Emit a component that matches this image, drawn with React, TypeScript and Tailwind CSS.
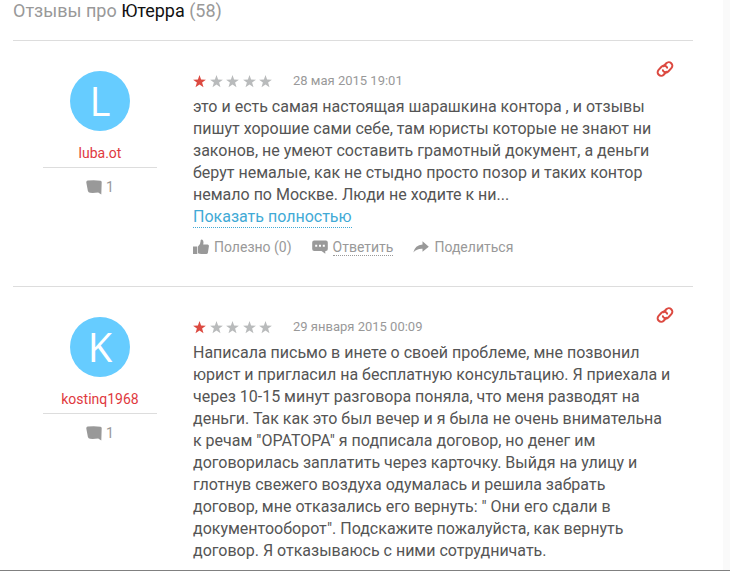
interface Review {
  id: number;
  author: string;
  letter: string;
  reviewCount: number;
  rating: number;
  date: string;
  text: string;
  truncated: boolean;
}

const reviews: Review[] = [
  {
    id: 1,
    author: "luba.ot",
    letter: "L",
    reviewCount: 1,
    rating: 1,
    date: "28 мая 2015 19:01",
    text: "это и есть самая настоящая шарашкина контора , и отзывы пишут хорошие сами себе, там юристы которые не знают ни законов, не умеют составить грамотный документ, а деньги берут немалые, как не стыдно просто позор и таких контор немало по Москве. Люди не ходите к ни...",
    truncated: true,
  },
  {
    id: 2,
    author: "kostinq1968",
    letter: "K",
    reviewCount: 1,
    rating: 1,
    date: "29 января 2015 00:09",
    text: 'Написала письмо в инете о своей проблеме, мне позвонил юрист и пригласил на бесплатную консультацию. Я приехала и через 10-15 минут разговора поняла, что меня разводят на деньги. Так как это был вечер и я была не очень внимательна к речам "ОРАТОРА" я подписала договор, но денег им договорилась заплатить через карточку. Выйдя на улицу и глотнув свежего воздуха одумалась и решила забрать договор, мне отказались его вернуть: " Они его сдали в документооборот". Подскажите пожалуйста, как вернуть договор. Я отказываюсь с ними сотрудничать.',
    truncated: false,
  },
];

const Star = ({ active }: { active: boolean }) => (
  <svg
    viewBox="0 0 14 14"
    className={active ? "size-[13px] fill-[#dc4a41]" : "size-[13px] fill-[#b9bbbc]"}
  >
    <path d="M7 0l1.700 4.900 5.200.1-4.100 3.200 1.500 5L7 10.300 2.700 13.200l1.500-5L.1 5l5.200-.1z" />
  </svg>
);

const BubbleIcon = () => (
  <svg viewBox="0 0 16 15" className="h-[15px] w-4 fill-[#999]">
    <path d="M1.700.6Q8-.1 14.500.7q1.200.2 1.200 1.300L15.300 14.600 12.200 12.600Q7 13.200 4 12.800 2.400 12.600 1.900 11L.3 2.500Q.2.800 1.700.6z" />
  </svg>
);

const ThumbIcon = () => (
  <svg viewBox="0 0 16 16" className="size-4 fill-[#999]">
    <path d="M0 7.500h4.300v7.500H0zM5 7.400Q7.900 5 7.600 1.200 8.300.2 9.400.8 11 1.800 10.200 5.500h4.400q1.500.2 1.300 1.700l-1 6.500q-.3 1.300-1.600 1.300H8.500Q6.200 15 5 14.200z" />
  </svg>
);

const AnswerIcon = () => (
  <svg viewBox="0 0 16 14" className="h-3.5 w-4 fill-[#999]">
    <path
      fillRule="evenodd"
      d="M2.200.5h11.600q2 0 2 2v6.500q0 2-2 2h-.5v2.700L9.500 11H2.200Q.2 11 .2 9V2.500q0-2 2-2zM3.200 4.800v2h2v-2zM7 4.800v2h2v-2zM10.800 4.800v2h2v-2z"
    />
  </svg>
);

const ShareIcon = () => (
  <svg viewBox="0 0 16 12" className="h-3 w-4 fill-[#999]">
    <path d="M9.500.3L15.800 5.700 9.500 10.800V7.800Q4 7.400.3 11.500 2 4.200 9.500 3.500z" />
  </svg>
);

const ChainIcon = () => (
  <svg
    viewBox="0 0 18 18"
    className="size-[18px] fill-none stroke-[#dc4a41]"
    strokeWidth="2"
    strokeLinecap="round"
  >
    <path d="M7.600 6.200l2.700-2.900a3.500 3.500 0 0 1 5.100 4.800l-2.900 3.100a3.500 3.500 0 0 1-4.800.3 3.400 3.400 0 0 1-.8-1.200" />
    <path d="M10.400 11.800l-2.700 2.900a3.500 3.500 0 0 1-5.100-4.800l2.900-3.100a3.500 3.500 0 0 1 4.800-.3 3.400 3.400 0 0 1 .8 1.200" />
  </svg>
);

function ReviewItem({ review }: { review: Review }) {
  return (
    <article className="flex border-t border-[#ddd] pt-[30px] pb-[29px] last:pb-2">
      {/* Author */}
      <div className="ml-[30px] w-[114px] shrink-0 text-center">
        <div className="mx-auto flex size-15 items-center justify-center rounded-full bg-[#66ccff] font-['Open_Sans',sans-serif] text-[40px] leading-none text-white">
          {review.letter}
        </div>
        <a
          href="#author"
          className="mt-3 block border-b border-[#ddd] pb-1 text-sm leading-5 text-[#e0393e]"
        >
          {review.author}
        </a>
        <div className="mt-2 flex items-center justify-center gap-1 text-sm leading-[22px] text-[#999]">
          <BubbleIcon />
          <span>{review.reviewCount}</span>
        </div>
      </div>

      {/* Content */}
      <div className="ml-9 min-w-0 flex-1">
        <div className="mb-[5px] flex h-5 items-center">
          <div
            className="flex w-[79px] justify-between"
            role="img"
            aria-label={`Оценка ${review.rating} из 5`}
          >
            {[1, 2, 3, 4, 5].map((n) => (
              <Star key={n} active={n <= review.rating} />
            ))}
          </div>
          <time className="ml-[21px] text-[13px] text-[#999]">{review.date}</time>
          <a href="#review" aria-label="Ссылка на отзыв" className="mr-[19px] mb-6 ml-auto">
            <ChainIcon />
          </a>
        </div>
        <p className="max-w-[479px] text-base leading-[22px] text-[#555]">
          {review.text}
        </p>
        {review.truncated && (
          <>
            <button className="mt-px block border-b border-dotted border-[#42aad6] text-base leading-5 text-[#42aad6]">
              Показать полностью
            </button>
            <div className="mt-[9px] flex items-center text-sm text-[#999]">
              <button className="flex items-center gap-[5px]">
                <ThumbIcon />
                Полезно (0)
              </button>
              <button className="ml-5 flex items-center gap-[5px]">
                <AnswerIcon />
                <span className="border-b border-dotted border-[#999] leading-4">
                  Ответить
                </span>
              </button>
              <button className="ml-5 flex items-center gap-[5px]">
                <ShareIcon />
                Поделиться
              </button>
            </div>
          </>
        )}
      </div>
    </article>
  );
}

export default function App() {
  return (
    <div className="flex border-b border-[#808080] bg-[#fafafa] font-['Roboto',sans-serif]">
      <main className="mr-[7px] flex-1 bg-white pr-[30px] pl-[13px]">
        <h1 className="pb-[18px] text-lg leading-[22px] text-[#999]">
          Отзывы про <span className="text-[#111]">Ютерра</span> (58)
        </h1>
        {reviews.map((review) => (
          <ReviewItem key={review.id} review={review} />
        ))}
      </main>
    </div>
  );
}
